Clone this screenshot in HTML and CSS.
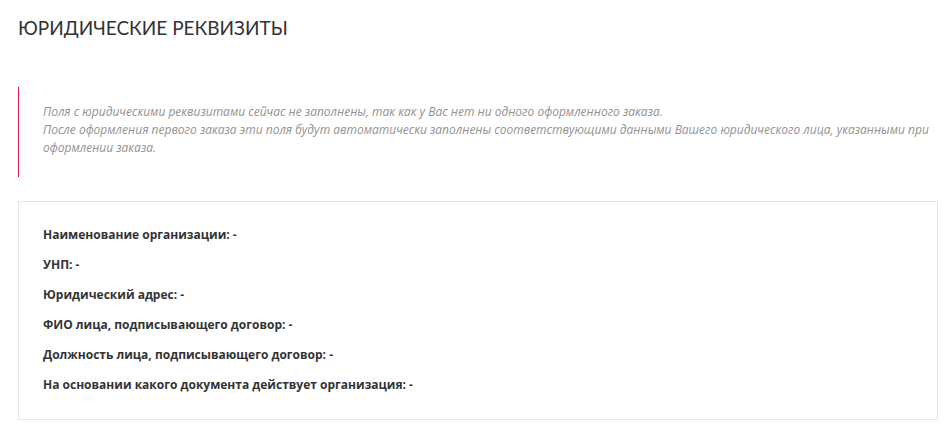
FILE: index.html
```html
<!DOCTYPE html>
<html lang="ru">
<head>
    <meta charset="UTF-8">
    <meta name="viewport" content="width=device-width, initial-scale=1.0">
    <title>Юридические реквизиты</title>
    <link rel="stylesheet" href="styles.css">
</head>
<body>
    <div class="page">
        <!-- Title -->
        <h1 class="page-title">Юридические реквизиты</h1>

        <!-- Notice about empty fields -->
        <div class="notice">
            <p>Поля с юридическими реквизитами сейчас не заполнены, так как у Вас нет ни одного оформленного заказа.<br>
            После оформления первого заказа эти поля будут автоматически заполнены соответствующими данными Вашего юридического лица, указанными при оформлении заказа.</p>
        </div>

        <!-- Requisites list -->
        <div class="requisites">
            <div class="requisites-row">Наименование организации: -</div>
            <div class="requisites-row">УНП: -</div>
            <div class="requisites-row">Юридический адрес: -</div>
            <div class="requisites-row">ФИО лица, подписывающего договор: -</div>
            <div class="requisites-row">Должность лица, подписывающего договор: -</div>
            <div class="requisites-row">На основании какого документа действует организация: -</div>
        </div>
    </div>
</body>
</html>
```

FILE: styles.css
```css
/* General Reset */
body {
    margin: 0;
    padding: 0;
    background-color: #fff;
    color: #333;
    font-family: "Open Sans", Arial, sans-serif;
}

.page {
    width: 920px;
    padding: 0 18px;
}

.page-title {
    margin: 0;
    padding-top: 16px;
    font-family: Lato, "Open Sans", sans-serif;
    font-size: 19px;
    font-weight: 400;
    line-height: 24px;
    text-transform: uppercase;
    color: #333;
}

/* Notice with red line on the left */
.notice {
    margin-top: 47px;
    padding: 16px 0 20px 24px;
    border-left: 1px solid #e8194f;
}

.notice p {
    margin: 0;
    font-size: 12px;
    font-style: italic;
    line-height: 18px;
    color: #929292;
}

/* Requisites box */
.requisites {
    display: flex;
    flex-direction: column;
    gap: 12px;
    margin-top: 24px;
    padding: 24px 24px 25px;
    border: 1px solid #e5e5e5;
}

.requisites-row {
    font-size: 12px;
    font-weight: 700;
    line-height: 18px;
    color: #333;
}
```
